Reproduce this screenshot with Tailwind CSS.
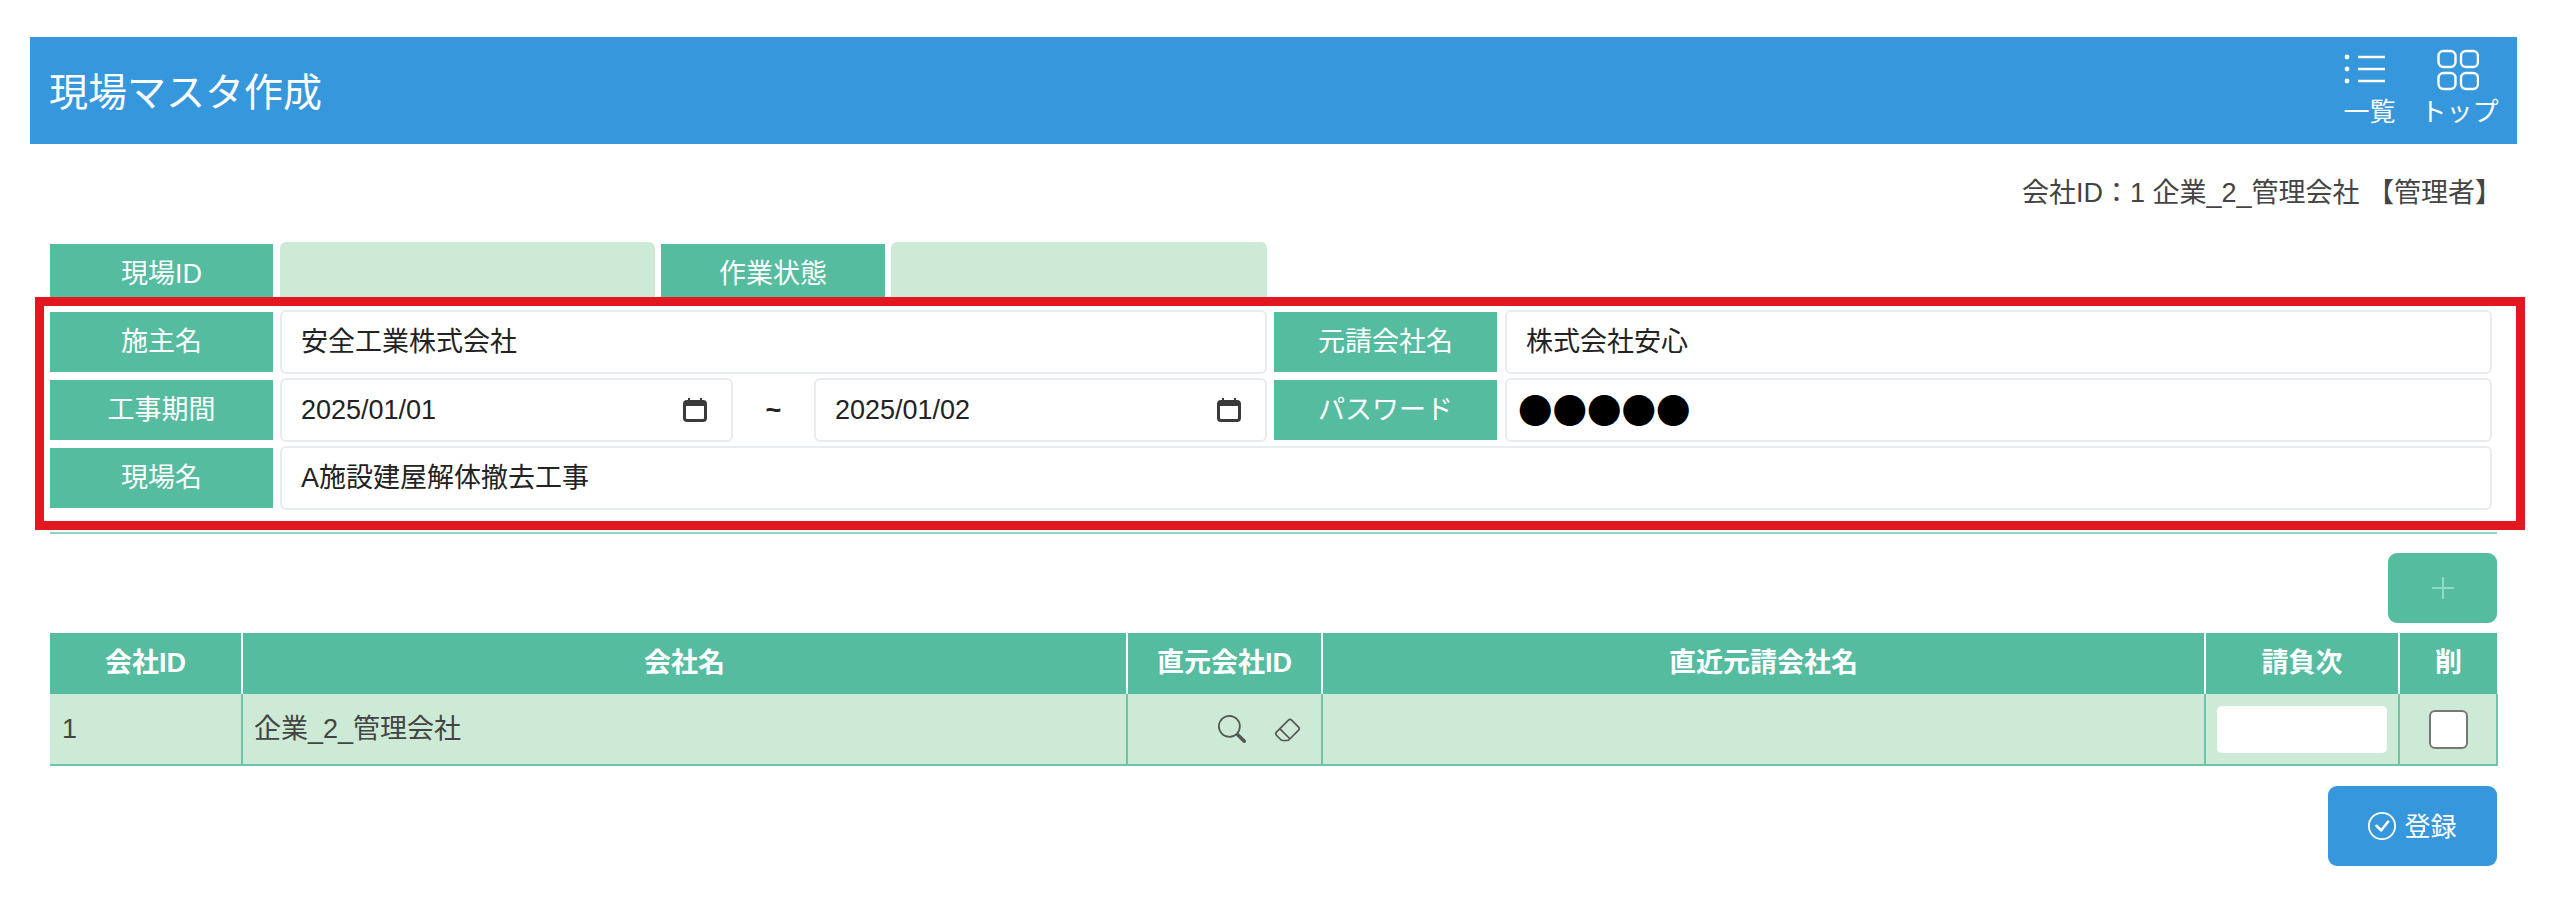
<!DOCTYPE html>
<html lang="ja">
<head>
<meta charset="utf-8">
<title>現場マスタ作成</title>
<script src="https://cdn.jsdelivr.net/npm/@tailwindcss/browser@4"></script>
</head>
<body class="bg-white font-['Liberation_Sans','Noto_Sans_CJK_JP',sans-serif] text-[#333]">
<div class="pt-[37px] pl-[30px] w-[2517px]">
    <!-- Header -->
    <div class="h-[107px] bg-[#3797dd] flex items-center justify-between pl-[20px] pr-[20px] text-white">
        <h1 class="text-[39px] font-normal pt-[5px] -ml-[1px]">現場マスタ作成</h1>
        <div class="flex items-start gap-[26px]">
            <a class="flex flex-col items-center w-[53px]">
                <svg class="w-[44px] h-[42px] mb-[6px] -ml-[8px] -mt-[6px]" viewBox="0 0 44 42" fill="none" stroke="white" stroke-width="2.4">
                    <circle cx="3" cy="8" r="2.4" fill="white" stroke="none"/><circle cx="3" cy="20" r="2.4" fill="white" stroke="none"/><circle cx="3" cy="32" r="2.4" fill="white" stroke="none"/>
                    <path d="M14 8h27M14 20h27M14 32h27"/>
                </svg>
                <span class="text-[26px] leading-[30px] whitespace-nowrap">一覧</span>
            </a>
            <a class="flex flex-col items-center w-[75px]">
                <svg class="w-[42px] h-[42px] mb-[6px] -ml-[3px] -mt-[6px]" viewBox="0 0 42 42" fill="none" stroke="white" stroke-width="2.4">
                    <rect x="1.5" y="2" width="17" height="16" rx="5"/><rect x="24" y="2" width="17" height="16" rx="5"/>
                    <rect x="1.5" y="24" width="17" height="16" rx="5"/><rect x="24" y="24" width="17" height="16" rx="5"/>
                </svg>
                <span class="text-[26px] leading-[30px] whitespace-nowrap">トップ</span>
            </a>
        </div>
    </div>

    <div class="px-[20px]">
        <p class="text-right text-[27px] leading-[34px] mt-[32px] -mr-[5px] text-[#444]">会社ID：1 企業_2_管理会社 【管理者】</p>

        <!-- Form -->
        <div class="relative mt-[32px] pb-[22px] border-b-2 border-[#8fd3bd] flex flex-col gap-[4px] text-[27px]">
            <div class="flex gap-[7px] h-[64px]">
                <div class="w-[223px] my-[2px] bg-[#55bc9f] text-white flex items-center justify-center">現場ID</div>
                <div class="w-[375px] bg-[#cdead6] rounded-[6px]"></div>
                <div class="w-[224px] my-[2px] -ml-[1px] bg-[#55bc9f] text-white flex items-center justify-center">作業状態</div>
                <div class="w-[376px] -ml-[1px] bg-[#cdead6] rounded-[6px]"></div>
            </div>
            <div class="flex gap-[7px] h-[64px]">
                <div class="w-[223px] my-[2px] bg-[#55bc9f] text-white flex items-center justify-center">施主名</div>
                <div class="w-[987px] bg-white border-2 border-[#e9ecef] rounded-[6px] flex items-center pl-[19px] text-[#222]">安全工業株式会社</div>
                <div class="w-[223px] my-[2px] bg-[#55bc9f] text-white flex items-center justify-center">元請会社名</div>
                <div class="w-[987px] ml-[1px] bg-white border-2 border-[#e9ecef] rounded-[6px] flex items-center pl-[19px] text-[#222]">株式会社安心</div>
            </div>
            <div class="flex gap-[7px] h-[64px]">
                <div class="w-[223px] my-[2px] bg-[#55bc9f] text-white flex items-center justify-center">工事期間</div>
                <div class="w-[453px] bg-white border-2 border-[#e9ecef] rounded-[6px] flex items-center justify-between pl-[19px] pr-[24px] text-[#222]">
                    <span>2025/01/01</span>
                    <svg class="w-[24px] h-[24px]" viewBox="0 0 24 24" fill="none" stroke="#3a3a3a" stroke-width="3"><rect x="1.5" y="3.5" width="21" height="19" rx="2.5"/><path d="M1 5.5h22" stroke-width="5"/><path d="M6 0v3M18 0v3" stroke-width="2"/></svg>
                </div>
                <div class="w-[67px] flex items-center justify-center font-bold text-[#222]">~</div>
                <div class="w-[453px] bg-white border-2 border-[#e9ecef] rounded-[6px] flex items-center justify-between pl-[19px] pr-[24px] text-[#222]">
                    <span>2025/01/02</span>
                    <svg class="w-[24px] h-[24px]" viewBox="0 0 24 24" fill="none" stroke="#3a3a3a" stroke-width="3"><rect x="1.5" y="3.5" width="21" height="19" rx="2.5"/><path d="M1 5.5h22" stroke-width="5"/><path d="M6 0v3M18 0v3" stroke-width="2"/></svg>
                </div>
                <div class="w-[223px] my-[2px] bg-[#55bc9f] text-white flex items-center justify-center">パスワード</div>
                <div class="w-[987px] ml-[1px] bg-white border-2 border-[#e9ecef] rounded-[6px] flex items-center pl-[11px] font-['Noto_Sans_CJK_JP',sans-serif] text-[34.5px] text-black">●●●●●</div>
            </div>
            <div class="flex gap-[7px] h-[64px]">
                <div class="w-[223px] my-[2px] bg-[#55bc9f] text-white flex items-center justify-center">現場名</div>
                <div class="w-[2212px] bg-white border-2 border-[#e9ecef] rounded-[6px] flex items-center pl-[19px] text-[#222]">A施設建屋解体撤去工事</div>
            </div>
            <!-- red highlight -->
            <div class="absolute left-[-15px] top-[55px] w-[2490px] h-[233px] border-[9px] border-[#e3171f] pointer-events-none"></div>
        </div>

        <!-- Add button -->
        <div class="flex justify-end mt-[19px]">
            <button class="w-[109px] h-[70px] bg-[#55bc9f] rounded-[9px] text-[#8fdcc3] flex items-center justify-center">
                <svg class="w-[24px] h-[24px]" viewBox="0 0 24 24" stroke="currentColor" stroke-width="2"><path d="M12 1v22M1 12h22"/></svg>
            </button>
        </div>

        <!-- Table -->
        <table class="mt-[10px] w-[2447px] table-fixed border-collapse text-[27px]">
            <colgroup>
                <col class="w-[192px]"><col class="w-[885px]"><col class="w-[195px]"><col class="w-[883px]"><col class="w-[194px]"><col class="w-[98px]">
            </colgroup>
            <thead>
                <tr class="h-[61px] bg-[#55bc9f] text-white font-bold">
                    <th class="border-r-2 border-white">会社ID</th>
                    <th class="border-r-2 border-white">会社名</th>
                    <th class="border-r-2 border-white">直元会社ID</th>
                    <th class="border-r-2 border-white">直近元請会社名</th>
                    <th class="border-r-2 border-white">請負次</th>
                    <th>削</th>
                </tr>
            </thead>
            <tbody>
                <tr class="h-[71px] bg-[#cdead6] text-[#444] border-b-2 border-[#6cc5a8]">
                    <td class="pl-[12px] border-r-2 border-[#6cc5a8]">1</td>
                    <td class="pl-[11px] border-r-2 border-[#6cc5a8]">企業_2_管理会社</td>
                    <td class="border-r-2 border-[#6cc5a8]">
                        <div class="flex items-center justify-end gap-[28px] pr-[20px] text-[#555]">
                            <svg class="w-[28px] h-[28px]" viewBox="0 0 16 16" fill="currentColor"><path d="M11.742 10.344a6.5 6.5 0 1 0-1.397 1.398h-.001q.044.06.098.115l3.85 3.85a1 1 0 0 0 1.415-1.414l-3.85-3.85a1 1 0 0 0-.115-.1zM12 6.5a5.5 5.5 0 1 1-11 0 5.5 5.5 0 0 1 11 0"/></svg>
                            <svg class="w-[27px] h-[27px]" viewBox="0 0 16 16" fill="currentColor"><path d="M8.086 2.207a2 2 0 0 1 2.828 0l3.879 3.879a2 2 0 0 1 0 2.828l-5.5 5.5A2 2 0 0 1 7.879 15H5.12a2 2 0 0 1-1.414-.586l-2.5-2.5a2 2 0 0 1 0-2.828zm2.121.707a1 1 0 0 0-1.414 0L4.16 7.547l5.293 5.293 4.633-4.633a1 1 0 0 0 0-1.414zM8.746 13.547 3.453 8.254 1.914 9.793a1 1 0 0 0 0 1.414l2.5 2.5a1 1 0 0 0 .707.293H7.88a1 1 0 0 0 .707-.293z"/></svg>
                        </div>
                    </td>
                    <td class="border-r-2 border-[#6cc5a8]"></td>
                    <td class="border-r-2 border-[#6cc5a8]">
                        <div class="w-[170px] h-[47px] mx-auto bg-white rounded-[5px]"></div>
                    </td>
                    <td class="border-r-2 border-[#6cc5a8]">
                        <div class="w-[39px] h-[39px] mx-auto bg-white border-2 border-[#777] rounded-[6px]"></div>
                    </td>
                </tr>
            </tbody>
        </table>

        <!-- Register -->
        <div class="flex justify-end mt-[20px]">
            <button class="w-[169px] h-[80px] bg-[#3797dd] rounded-[9px] text-white flex items-center justify-center gap-[8px] text-[26px]">
                <svg class="w-[28px] h-[28px]" viewBox="0 0 16 16" fill="currentColor"><path d="M8 15A7 7 0 1 1 8 1a7 7 0 0 1 0 14m0 1A8 8 0 1 0 8 0a8 8 0 0 0 0 16"/><path d="M10.97 4.97a.235.235 0 0 0-.02.022L7.477 9.417 5.384 7.323a.75.75 0 0 0-1.06 1.06L6.97 11.03a.75.75 0 0 0 1.079-.02l3.992-4.99a.75.75 0 0 0-1.071-1.05"/></svg>
                <span class="pt-[3px]">登録</span>
            </button>
        </div>
    </div>
</div>
</body>
</html>
